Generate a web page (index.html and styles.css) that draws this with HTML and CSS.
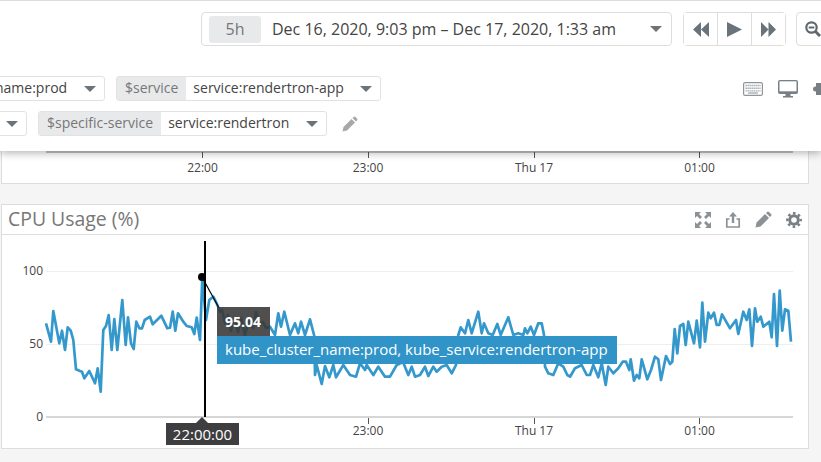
FILE: index.html
```html
<!DOCTYPE html>
<html lang="en">
<head>
  <meta charset="UTF-8" />
  <title>CPU Usage</title>
  <link rel="stylesheet" href="styles.css">
</head>
<body>
  <header class="topbar">
    <div class="timebar">
      <div class="picker">
        <span class="badge">5h</span>
        <span class="range">Dec 16, 2020, 9:03 pm – Dec 17, 2020, 1:33 am</span>
        <span class="caret picker-caret"></span>
      </div>
      <div class="btn-group">
        <button class="btn">
          <svg width="16" height="15" viewBox="0 0 16 15"><path class="ico" d="M8 0v15L0 7.500zM16 0v15L8 7.500z"/></svg>
        </button>
        <button class="btn">
          <svg width="15" height="15" viewBox="0 0 15 15"><path class="ico" d="M0 0l15 7.500L0 15z"/></svg>
        </button>
        <button class="btn">
          <svg width="15" height="15" viewBox="0 0 15 15"><path class="ico" d="M0 0l7.500 7.500L0 15zM7.500 0L15 7.500 7.500 15z"/></svg>
        </button>
      </div>
      <button class="btn btn-zoom">
        <svg width="17" height="16" viewBox="0 0 17 16">
          <circle cx="6.500" cy="6.500" r="5.200" fill="none" stroke="#5f686f" stroke-width="2.200"/>
          <path d="M3.700 5.500h5.600v2H3.700z" fill="#5f686f"/>
          <path d="M10.500 10.500l4.500 4.500" stroke="#5f686f" stroke-width="3"/>
        </svg>
      </button>
    </div>

    <div class="filter-row">
      <div class="pill pill-cut">
        <span class="pill-value">name:prod</span>
        <span class="caret"></span>
      </div>
      <div class="pill pill-service">
        <span class="pill-label">$service</span>
        <span class="pill-value">service:rendertron-app</span>
        <span class="caret"></span>
      </div>
      <div class="tools">
        <svg width="20" height="14" viewBox="0 0 20 14">
          <rect x="0.600" y="0.600" width="18.800" height="12.800" rx="1.500" fill="#fff" stroke="#8f9598" stroke-width="1.200"/>
          <path d="M2.500 3.500h15M2.500 6.200h15M2.500 8.900h15" stroke="#9aa0a3" stroke-width="1.400" stroke-dasharray="1.300 .7"/>
          <path d="M5 11h10" stroke="#9aa0a3" stroke-width="1.200"/>
        </svg>
        <svg width="20" height="18" viewBox="0 0 20 18">
          <rect width="20" height="14" rx="2" fill="#777f84"/>
          <rect x="1.500" y="1.300" width="17" height="10" fill="#fff"/>
          <path d="M7.500 14h5v2h2.500v1.500H5V16h2.500z" fill="#777f84"/>
        </svg>
        <svg width="16" height="14" viewBox="0 0 16 14">
          <rect x="3" y="1" width="13" height="12" fill="#777f84"/>
          <circle cx="2.500" cy="7" r="2.500" fill="#777f84"/>
        </svg>
      </div>
    </div>

    <div class="filter-row">
      <div class="pill pill-stub">
        <span class="caret"></span>
      </div>
      <div class="pill pill-specific">
        <span class="pill-label">$specific-service</span>
        <span class="pill-value">service:rendertron</span>
        <span class="caret"></span>
      </div>
      <svg class="edit-vars" width="16" height="16" viewBox="0 0 16 16">
        <path d="M0.500 15.500l1-4.500 8-8 3.500 3.500-8 8zM10.500 2l1-1q1-1 2 0l1.500 1.500q1 1 0 2l-1 1z"/>
      </svg>
    </div>
  </header>

  <main class="content">
    <section class="card card-top">
      <svg class="axis-top" width="806" height="32" viewBox="2 151 806 32">
        <path class="axis axis-dark" d="M46 152h747"/>
        <path class="tick" d="M202.500 152v6M368.500 152v6M534.500 152v6M699.500 152v6"/>
        <text class="tick-label" x="202.500" y="172">22:00</text>
        <text class="tick-label" x="368" y="172">23:00</text>
        <text class="tick-label" x="534" y="172">Thu 17</text>
        <text class="tick-label" x="699.500" y="172">01:00</text>
      </svg>
    </section>

    <section class="card card-cpu">
      <div class="card-head">
        <h2 class="card-title">CPU Usage (%)</h2>
        <div class="card-actions">
          <svg width="16" height="16" viewBox="0 0 16 16">
            <path class="ico-light" d="M0 0h6L4 2l3 3-2 2-3-3-2 2zM16 0v6l-2-2-3 3-2-2 3-3-2-2zM0 16v-6l2 2 3-3 2 2-3 3 2 2zM16 16h-6l2-2-3-3 2-2 3 3 2-2z"/>
          </svg>
          <svg width="16" height="16" viewBox="0 0 16 16">
            <path class="ico-light" d="M8 0l4 4.500H9.200V11H6.800V4.500H4z"/>
            <path d="M4.500 7H1.800v8h12.400V7h-2.700" fill="none" stroke="#8b9296" stroke-width="1.700"/>
          </svg>
          <svg width="17" height="17" viewBox="0 0 17 17">
            <path class="ico-light" d="M0.500 16.500l1-5 8.500-8.500 4 4-8.500 8.500zM11 2l1-1q1-1 2 0l2 2q1 1 0 2l-1 1z"/>
          </svg>
          <svg width="16" height="16" viewBox="0 0 16 16">
            <circle cx="8" cy="8" r="4.300" fill="none" stroke="#777f84" stroke-width="3"/>
            <circle cx="8" cy="8" r="6.700" fill="none" stroke="#777f84" stroke-width="2.400" stroke-dasharray="2.630 2.630" stroke-dashoffset="1.300"/>
          </svg>
        </div>
      </div>

      <div class="chart">
        <svg class="chart-svg" width="806" height="213" viewBox="2 235 806 213">
          <path class="grid" d="M46 271.500h747M46 344.500h747"/>
          <path class="axis" d="M46 417h747"/>
          <path class="tick" d="M368.500 418v6M534.500 418v6M699.500 418v6"/>
          <text class="y-label" x="43" y="275">100</text>
          <text class="y-label" x="43" y="348">50</text>
          <text class="y-label" x="43" y="421">0</text>
          <text class="tick-label" x="368" y="435">23:00</text>
          <text class="tick-label" x="534" y="435">Thu 17</text>
          <text class="tick-label" x="699.500" y="435">01:00</text>
          <polyline class="series" points="46,323.300 51,341.700 53.300,311 59.300,343.300 62,330.700 65,350 67.700,327.300 70.700,330.700 73.300,340 76,369.300 80,371 82,371.700 84.300,378.300 89.300,371 95,383.300 97.700,368.300 100.700,391.700 103.300,330 106,326 108.700,315 111.700,350 114.300,319 117.300,350 122.300,300 125.700,345 128,317.300 131,343.300 133.700,349 136.300,321.700 139.300,328.300 142,328.300 144.700,320 150,316.700 152.700,324.300 161.300,315.700 167.300,328.300 170,327.700 172.700,311.700 175.300,330.700 178,313.300 183.300,321.700 186.700,326 191.700,327.300 194.300,334 196.700,317.700 200,340 202.300,278.300 206,320 209.300,300 213.300,296.700 216.700,303.300 220,311.700 222,310 225,323 228,315 231,331 234,318 238,332 241,318 245,335 249,320 253,328 256,312 260,325 263,322 266,328 270,326.700 275,335 278.300,313.300 281,326.700 284.300,311.700 290,335 295,323.300 298.300,333.300 301,321.700 305,335 310,319.300 314.300,336 315,375 316.700,365 321.700,384 325,366 329.300,377.300 333.300,365 336,377.300 343.300,365 350,375 356,376.700 360,363.300 365,370 366.700,365 373.300,375 378.300,366.700 385,376.700 390,376.700 396.700,365 403,362 408.300,375 411.700,366.700 415,376.700 420,375 425,366.700 428.300,376 433.300,366.700 436.700,371.700 441.700,366.700 446.700,365 451.700,373.300 456,365 458.300,335 460.700,327.300 465,333.300 468.300,320 471.700,333.300 478.300,311.700 481.700,333.300 484,323.300 488.300,333.300 492.700,335 497.300,324 500.700,335 508.300,317.300 513.300,335 518.300,333.300 523.300,335 525,328.300 527.300,333.300 530.700,326.700 534,335 538.300,323.300 541.700,323.300 544,335 545,366.700 548.300,373.300 553.300,375 558.300,363.300 563.300,366.700 567.300,375 570,376.700 575,368.300 581.700,365 586.700,375 590,375 593.300,365 598.300,377.300 601.700,363.300 605.700,385 608.300,366.700 613.300,373.300 618.300,368.300 622.700,361.700 626,361.700 629.300,370 630.700,359.300 634,380.700 636.700,375 639.300,378.300 641.700,359.300 647.300,379.300 651,370 655,356.700 658.300,359.300 661,380 666,356 670,364 672.300,361.700 674.700,329 677.300,353.300 680,326 683.300,324 685.700,345 688.300,321.700 694,343.300 696.700,320.700 700,347.300 702.300,302.700 705,341.700 708.300,312.700 710.700,318.300 714,312.700 716.700,325 719.300,325 722,314.300 730,328.300 736,320 738.300,334 743.300,311.700 746.700,320 749.300,309.300 752,346 755,308.300 757.300,321.700 760.700,316.700 763.300,326.700 769.300,321.700 771.700,337.300 774,294 777,346 779.700,290.700 782.300,330.700 785,309.300 788.300,310.700 791,341.700"/>
          <path class="crosshair" d="M205 241v176"/>
          <path class="leader" d="M202 277l17 31"/>
          <circle cx="202" cy="277" r="4"/>
        </svg>

        <div class="point-tip">
          <div class="point-value">95.04</div>
          <div class="point-name">kube_cluster_name:prod, kube_service:rendertron-app</div>
        </div>
        <div class="time-tip">22:00:00</div>
      </div>
    </section>
  </main>
</body>
</html>
```

FILE: styles.css
```css
html, body {
  height: 100%;
}

body {
  margin: 0;
  overflow: hidden;
  background: #f5f5f5;
  color: #333;
  font-family: "Open Sans", "Liberation Sans", sans-serif;
  font-size: 14px;
}

.topbar {
  position: relative;
  z-index: 2;
  box-sizing: border-box;
  height: 151px;
  background: #fff;
  border-top: 1px solid #ddd;
  box-shadow: 0 2px 8px rgba(0, 0, 0, 0.3);
}

.timebar {
  display: flex;
  height: 34px;
  margin: 11px 0 30px 201px;
}

.picker {
  display: flex;
  flex: none;
  align-items: center;
  box-sizing: border-box;
  width: 471px;
  padding: 0 9px 0 7px;
  background: #fff;
  border: 1px solid #ddd;
  border-radius: 4px;
}

.badge {
  width: 52px;
  height: 27px;
  line-height: 27px;
  text-align: center;
  font-size: 16px;
  color: #777;
  background: #e8e9eb;
  border-radius: 3px;
}

.range {
  flex: 1;
  margin-left: 11px;
  font-size: 16px;
  color: #444;
  white-space: nowrap;
}

.caret {
  flex: none;
  width: 0;
  height: 0;
  border-top: 6px solid #6d7479;
  border-left: 6px solid transparent;
  border-right: 6px solid transparent;
}

.btn-group {
  display: flex;
  flex: none;
  box-sizing: border-box;
  width: 103px;
  margin-left: 11px;
  border: 1px solid #ddd;
  border-radius: 4px;
}

.btn {
  display: flex;
  flex: 1;
  align-items: center;
  justify-content: center;
  padding: 0;
  background: #fff;
  border: none;
  border-left: 1px solid #ddd;
}

.btn:first-child {
  border-left: none;
}

.btn-zoom {
  flex: none;
  justify-content: flex-start;
  box-sizing: border-box;
  width: 40px;
  margin-left: 10px;
  padding-left: 8px;
  border: 1px solid #ddd;
  border-radius: 4px;
}

.ico {
  fill: #69737b;
}

.ico-light {
  fill: #8b9296;
}

.filter-row {
  display: flex;
  align-items: center;
  height: 25px;
  margin-bottom: 10px;
  white-space: nowrap;
}

.pill {
  display: flex;
  flex: none;
  align-items: stretch;
  box-sizing: border-box;
  height: 25px;
  margin-right: 11px;
  background: #fff;
  border: 1px solid #e2e2e2;
  border-radius: 3px;
  line-height: 22px;
}

.pill .caret {
  align-self: center;
  margin-right: 8px;
  margin-left: auto;
}

.pill-label {
  padding: 0 8px;
  color: #777;
  background: #e8e9eb;
}

.pill-value {
  padding: 0 7px;
  color: #444;
}

.pill-cut {
  width: 114px;
  margin-left: -9px;
}

.pill-cut .pill-value {
  padding-left: 3px;
}

.pill-stub {
  width: 36px;
  margin-left: -9px;
}

.pill-service {
  width: 265px;
}

.pill-specific {
  width: 289px;
}

.tools {
  display: flex;
  flex: none;
  align-items: center;
  gap: 15px;
  margin-left: 351px;
}

.edit-vars {
  flex: none;
  margin-left: 4px;
  fill: #a5a9ac;
}

.content {
  padding: 0 12px 0 1px;
}

.card {
  background: #fff;
  border: 1px solid #ddd;
  border-top: none;
}

.card-top {
  margin-bottom: 20px;
}

.card-cpu {
  border-top: 1px solid #ddd;
}

.axis-top,
.chart-svg {
  display: block;
}

.card-head {
  display: flex;
  align-items: center;
  justify-content: space-between;
  box-sizing: border-box;
  height: 30px;
  padding: 0 6px;
  border-bottom: 1px solid #ddd;
}

.card-title {
  margin: 0 0 2px;
  font-size: 19.400px;
  font-weight: 400;
  color: #777;
}

.card-actions {
  display: flex;
  align-items: center;
  gap: 14px;
}

.chart {
  position: relative;
  height: 213px;
}

.axis {
  fill: none;
  stroke: #d6d6d6;
  stroke-width: 2;
}

.axis-dark {
  stroke: #c4c4c4;
}

.grid {
  fill: none;
  stroke: #eee;
  stroke-width: 1;
}

.tick {
  fill: none;
  stroke: #555;
  stroke-width: 1;
}

.tick-label,
.y-label {
  font-size: 12px;
  fill: #444;
}

.tick-label {
  text-anchor: middle;
}

.y-label {
  text-anchor: end;
}

.series {
  fill: none;
  stroke: #3498cc;
  stroke-width: 2.700;
  stroke-linejoin: round;
}

.crosshair {
  fill: none;
  stroke: #000;
  stroke-width: 2;
}

.leader {
  fill: none;
  stroke: #000;
  stroke-width: 1.200;
}

.point-tip {
  position: absolute;
  left: 215px;
  top: 72px;
  display: flex;
  flex-direction: column;
  align-items: flex-start;
  color: #fff;
  white-space: nowrap;
}

.point-value {
  box-sizing: border-box;
  width: 53px;
  height: 29px;
  padding-left: 8px;
  line-height: 30px;
  font-weight: 700;
  background: rgba(55, 55, 55, 0.88);
}

.point-name {
  box-sizing: border-box;
  width: 400px;
  height: 28px;
  padding-left: 8px;
  line-height: 27px;
  font-size: 15px;
  background: #3094c8;
}

.time-tip {
  position: absolute;
  left: 164px;
  top: 188px;
  width: 73px;
  height: 22px;
  line-height: 22px;
  text-align: center;
  font-size: 15px;
  color: #fff;
  background: #3e3e40;
}

.time-tip::before {
  content: "";
  position: absolute;
  left: 30px;
  top: -6px;
  border-bottom: 6px solid #3e3e40;
  border-left: 6px solid transparent;
  border-right: 6px solid transparent;
}
```
